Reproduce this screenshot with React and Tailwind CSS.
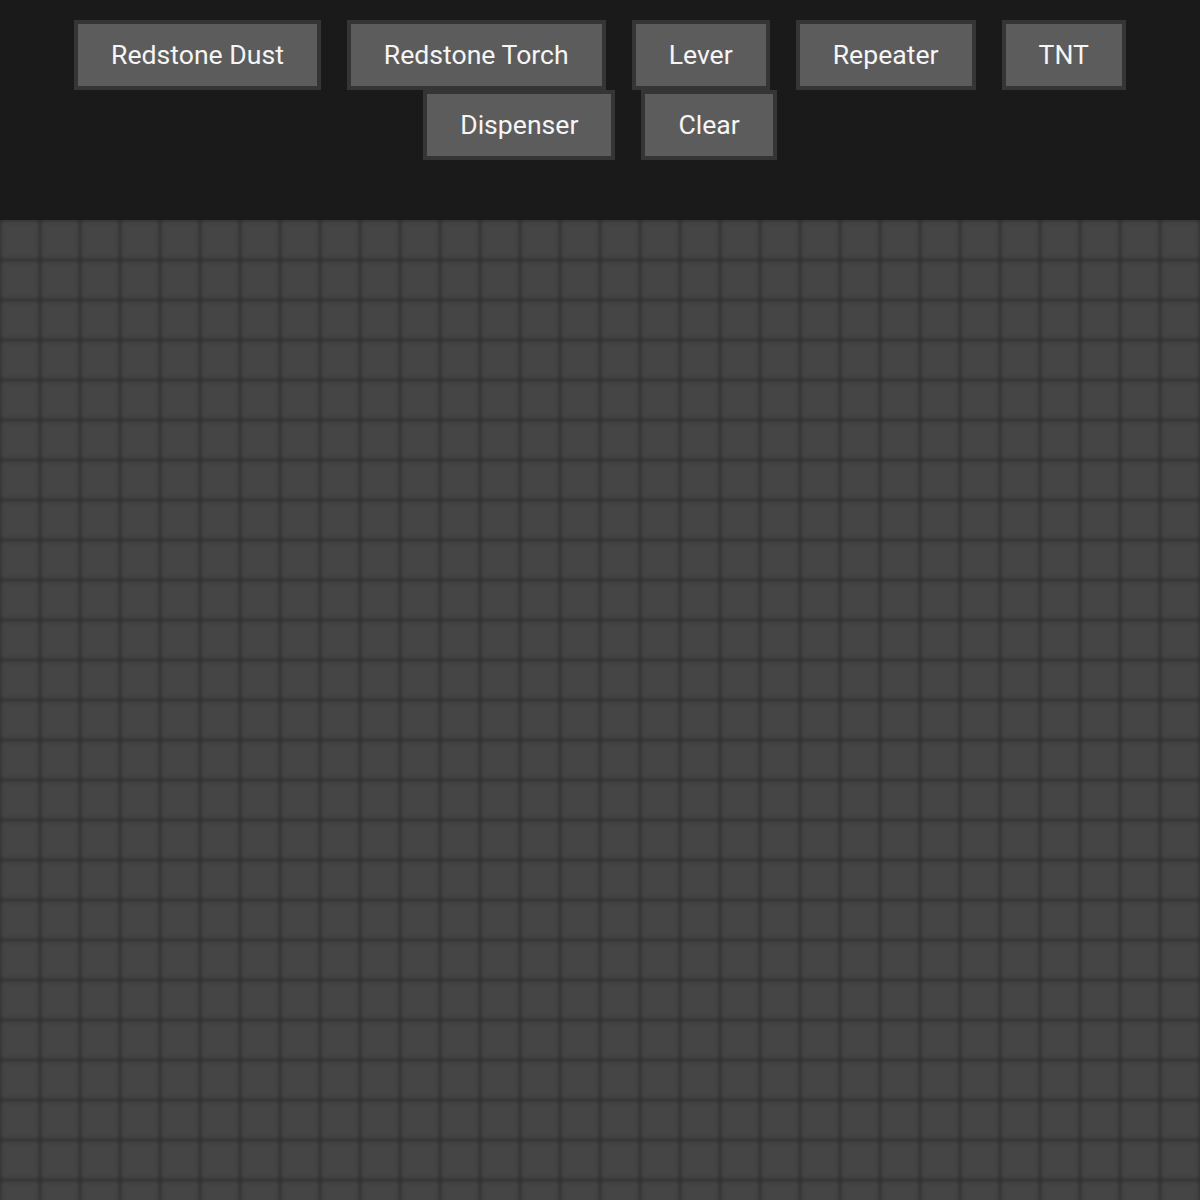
import React from 'react';

const tools = ['Redstone Dust', 'Redstone Torch', 'Lever', 'Repeater', 'TNT', 'Dispenser', 'Clear'];

const ROWS = 25;
const COLS = 30;

export default function App() {
  const cells = Array.from({ length: ROWS * COLS });

  return (
    <div className="min-h-[1200px] bg-[#444444] font-['Roboto','Liberation_Sans',sans-serif]">
      {/* Toolbar */}
      <div className="h-[220px] bg-[#1a1a1a] pt-[20px]">
        <div className="flex flex-wrap justify-center gap-x-[26px]">
          {tools.map((t) => (
            <button
              key={t}
              className="border-4 border-[#353535] bg-[#5c5c5c] px-[33px] py-[15px] text-[26.6px] leading-[32px] text-[#f5f5f5]"
            >
              {t}
            </button>
          ))}
        </div>
      </div>

      {/* Grid */}
      <div className="grid grid-cols-[repeat(30,40px)] overflow-hidden">
        {cells.map((_, i) => (
          <div key={i} className="h-[40px] w-[40px] bg-[#454545] shadow-[inset_0_0_5px_rgba(0,0,0,0.45)]" />
        ))}
      </div>
    </div>
  );
}
